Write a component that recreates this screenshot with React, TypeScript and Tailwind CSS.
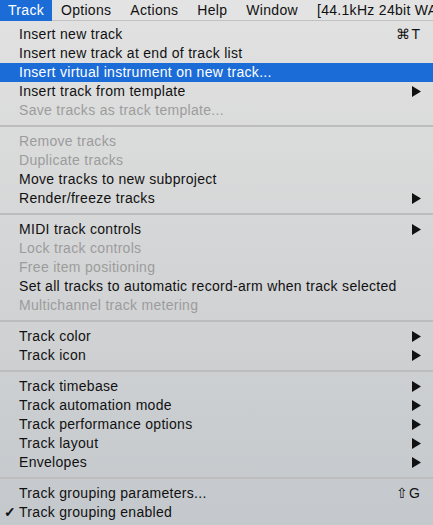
import React from "react";

type Item =
  | { sep: true }
  | {
      sep?: false;
      label: string;
      disabled?: boolean;
      submenu?: boolean;
      shortcut?: string;
      active?: boolean;
      checked?: boolean;
    };

const ITEMS: Item[] = [
  { label: "Insert new track", shortcut: "⌘T" },
  { label: "Insert new track at end of track list" },
  { label: "Insert virtual instrument on new track...", active: true },
  { label: "Insert track from template", submenu: true },
  { label: "Save tracks as track template...", disabled: true },
  { sep: true },
  { label: "Remove tracks", disabled: true },
  { label: "Duplicate tracks", disabled: true },
  { label: "Move tracks to new subproject" },
  { label: "Render/freeze tracks", submenu: true },
  { sep: true },
  { label: "MIDI track controls", submenu: true },
  { label: "Lock track controls", disabled: true },
  { label: "Free item positioning", disabled: true },
  { label: "Set all tracks to automatic record-arm when track selected" },
  { label: "Multichannel track metering", disabled: true },
  { sep: true },
  { label: "Track color", submenu: true },
  { label: "Track icon", submenu: true },
  { sep: true },
  { label: "Track timebase", submenu: true },
  { label: "Track automation mode", submenu: true },
  { label: "Track performance options", submenu: true },
  { label: "Track layout", submenu: true },
  { label: "Envelopes", submenu: true },
  { sep: true },
  { label: "Track grouping parameters...", shortcut: "⇧G" },
  { label: "Track grouping enabled", checked: true },
];

const MENUBAR = ["Options", "Actions", "Help", "Window", "[44.1kHz 24bit WAV"];

function Arrow() {
  return (
    <svg width="9" height="11" viewBox="0 0 9 11" aria-hidden="true">
      <polygon points="0,0 9,5.5 0,11" fill="#111" />
    </svg>
  );
}

export default function App() {
  return (
    <div
      className="h-[525px] w-[433px] overflow-hidden bg-[#d6d6d6] text-[14px] tracking-[0.3px] text-[#111]"
      style={{ fontFamily: '"Liberation Sans", Arial, sans-serif' }}
    >
      {/* Menu bar */}
      <div className="flex h-[21px] items-center whitespace-nowrap border-b border-[#c2c2c2] bg-[#e3e3e3] leading-[21px]">
        <div className="h-[21px] bg-[#1b6cd7] pl-[8px] pr-[8px] text-white">Track</div>
        <div className="flex gap-[19px] pl-[9px]">
          {MENUBAR.map((m) => (
            <span key={m}>{m}</span>
          ))}
        </div>
      </div>

      {/* Drop-down */}
      <div className="bg-gradient-to-b from-[#e1e1e1] via-[#d3d4d5] to-[#c3c8cc] pt-[4px] pb-[10px]">
        {ITEMS.map((it, i) =>
          it.sep ? (
            <div key={i} className="flex h-[12px] items-center">
              <div className="h-[2px] w-full bg-[#bdbdbd]" />
            </div>
          ) : (
            <div
              key={i}
              className={`flex h-[19px] items-center pl-[19px] pr-[12px] leading-[19px] ${
                it.active ? "bg-[#1c6cd8] text-white" : it.disabled ? "text-[#9c9c9c]" : ""
              }`}
            >
              <span className="relative flex-1 whitespace-nowrap">
                {it.checked && (
                  <span className="absolute left-[-15px] top-0 font-bold">✓</span>
                )}
                {it.label}
              </span>
              {it.submenu && <Arrow />}
              {it.shortcut && <span className="tracking-[1px]">{it.shortcut}</span>}
            </div>
          )
        )}
      </div>
    </div>
  );
}
